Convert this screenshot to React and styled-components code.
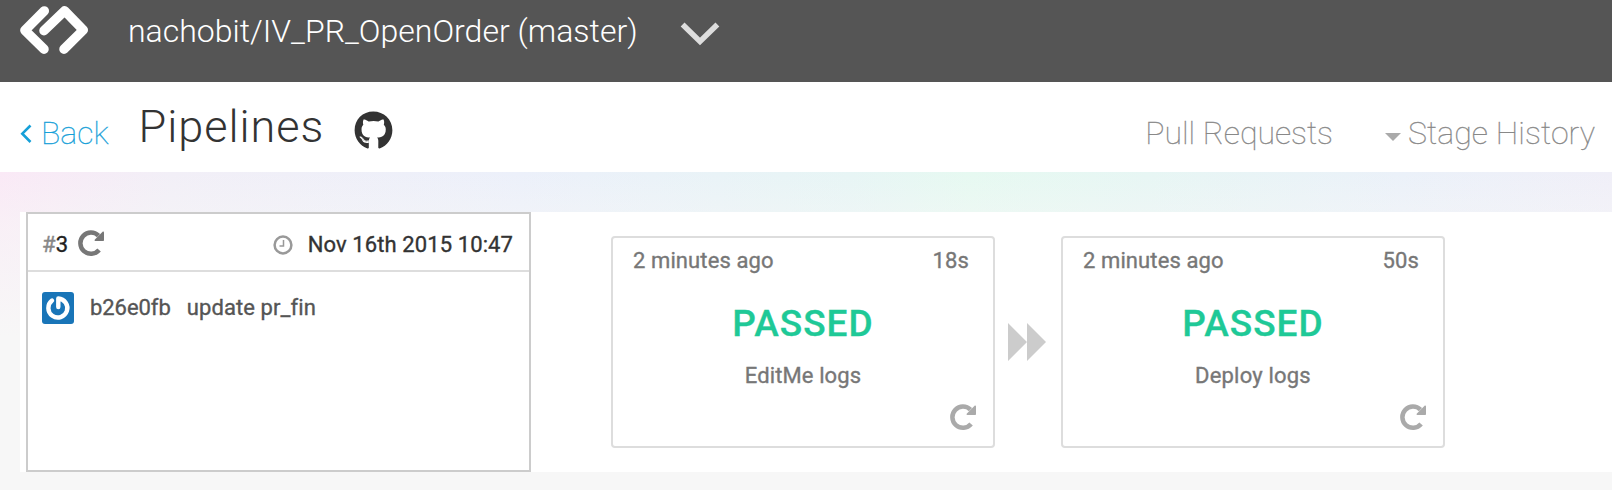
import React from "react";
import styled, { createGlobalStyle } from "styled-components";
import { FaGithub } from "react-icons/fa";

const Global = createGlobalStyle`
  * { box-sizing: border-box; }
  body { margin: 0; background: #f7f7f7; font-family: Roboto, "Liberation Sans", sans-serif; overflow: hidden; }
  h1, p { margin: 0; font-weight: inherit; }
`;

const Page = styled.div`
  height: 490px;
  display: flex;
  flex-direction: column;
`;

const TopBar = styled.header`
  height: 82px;
  flex: none;
  background: #555;
  display: flex;
  align-items: flex-start;
  padding-left: 20px;
`;

const Logo = styled.svg`
  width: 69px;
  height: 49px;
  margin: 6px 39px 0 0;
`;

const ProjectName = styled.span`
  width: 511px;
  margin-top: 12px;
  font-size: 32px;
  line-height: 38px;
  font-weight: 300;
  letter-spacing: 0.01px;
  color: #fff;
  white-space: nowrap;
`;

const Chevron = styled.svg`
  width: 40px;
  height: 24px;
  margin: 22px 0 0 41px;
`;

const SubBar = styled.nav`
  height: 90px;
  flex: none;
  background: #fff;
  display: flex;
  align-items: flex-start;
  padding: 0 17px 0 20px;
`;

const NavText = styled.a`
  margin-top: 32px;
  font-size: 32px;
  line-height: 38px;
  font-weight: 100;
  letter-spacing: ${(p) => p.$spacing || 0}px;
  color: ${(p) => p.$color || "#888"};
  -webkit-text-stroke: 0.3px currentColor;
  white-space: nowrap;
`;

const BackArrow = styled.svg`
  width: 13px;
  height: 20px;
  margin: 42px 8px 0 0;
`;

const Title = styled.h1`
  margin: 18px 0 0 30px;
  width: 188px;
  font-size: 45px;
  line-height: 53px;
  font-weight: 300;
  letter-spacing: 0.95px;
  color: #333;
`;

const Github = styled(FaGithub)`
  width: 39px;
  height: 39px;
  margin: 29px auto 0 27px;
  color: #333;
`;

const Caret = styled.svg`
  width: 16px;
  height: 8px;
  margin: 51px 7px 0 52px;
`;

const Backdrop = styled.main`
  flex: 1;
  padding: 40px 0 18px 20px;
  background:
    linear-gradient(to bottom, rgba(247, 247, 247, 0) 0, rgba(247, 247, 247, 0.45) 50px, #f7f7f7 165px),
    linear-gradient(to right, #fae9f6 0, #f2eff7 170px, #ecf0fa 520px, #e7f5f5 850px, #e6f9f1 970px, #e7f6f4 1150px, #ebf1f9 1400px, #f0eff8 1612px);
`;

const Pipeline = styled.section`
  height: 260px;
  background: #fff;
  display: flex;
  padding-left: 6px;
`;

const RunCard = styled.article`
  width: 505px;
  height: 260px;
  flex: none;
  border: 2px solid #ccc;
`;

const RunHead = styled.div`
  height: 58px;
  border-bottom: 2px solid #ddd;
  display: flex;
  align-items: center;
  padding: 5px 16px 0 14px;
`;

const Text = styled.span`
  font-size: 22px;
  line-height: 28px;
  letter-spacing: ${(p) => p.$spacing ?? 0.1}px;
  color: ${(p) => p.$color || "#777"};
  -webkit-text-stroke: 0.35px currentColor;
  white-space: nowrap;
`;

const RepeatIcon = styled.svg`
  width: 27px;
  height: 27px;
  margin: ${(p) => p.$margin || "0"};
  color: ${(p) => p.$color};
`;

const Clock = styled.svg`
  width: 20px;
  height: 20px;
  margin: 0 15px 0 auto;
`;

const Commit = styled.div`
  display: flex;
  align-items: center;
  padding: 20px 14px;
`;

const CommitText = styled(Text)`
  margin: -1px 0 0 16px;
`;

const Avatar = styled.svg`
  width: 32px;
  height: 32px;
  flex: none;
`;

const Stages = styled.div`
  display: flex;
  align-items: flex-start;
  margin: 24px 0 0 80px;
`;

const StageCard = styled.article`
  width: 384px;
  height: 212px;
  border: 2px solid #ddd;
  border-radius: 4px;
  display: flex;
  flex-direction: column;
  align-items: center;
`;

const StageHead = styled.div`
  align-self: stretch;
  display: flex;
  justify-content: space-between;
  padding: 9px 24px 0 20px;
`;

const Status = styled.p`
  margin-top: 27px;
  font-size: 37px;
  line-height: 44px;
  font-weight: 500;
  letter-spacing: 1px;
  color: #1fc997;
  -webkit-text-stroke: 0.3px currentColor;
`;

const StageName = styled(Text)`
  margin-top: 16px;
`;

const StageFoot = styled.div`
  align-self: flex-end;
  display: flex;
  padding: 14px 16px 0 0;
`;

const Forward = styled.svg`
  width: 38px;
  height: 38px;
  flex: none;
  margin: 87px 15px 0 13px;
`;

function Repeat(props) {
  return (
    <RepeatIcon viewBox="0 0 27 27" {...props}>
      <path d="M21.1 20A10.6 10.6 0 1 1 20.5 5.7" fill="none" stroke="currentColor" strokeWidth="4.500" />
      <path d="M26 2.200V10.200Q26 11 25.200 11H17.400C16.600 11 16.300 10 16.900 9.400L24.600 1.700C25.200 1.100 26 1.400 26 2.200Z" fill="currentColor" />
    </RepeatIcon>
  );
}

function Stage({ time, name, spacing }) {
  return (
    <StageCard>
      <StageHead>
        <Text>2 minutes ago</Text>
        <Text>{time}</Text>
      </StageHead>
      <Status>PASSED</Status>
      <StageName $spacing={spacing}>{name}</StageName>
      <StageFoot>
        <Repeat $color="#aaa" />
      </StageFoot>
    </StageCard>
  );
}

export default function App() {
  return (
    <Page>
      <Global />
      <TopBar>
        <Logo viewBox="0 0 69 49" fill="none" stroke="#fff" strokeWidth="9.500" strokeLinecap="round" strokeLinejoin="round">
          <path d="M24.300 4.900L4.900 24.300L24 43.200" />
          <path d="M24 24.700L44.600 4.800L63.300 24L44 43.200" />
        </Logo>
        <ProjectName>nachobit/IV_PR_OpenOrder (master)</ProjectName>
        <Chevron viewBox="0 0 40 24" fill="none" stroke="#ddd" strokeWidth="5.500">
          <path d="M2.600 2.500L20 19.500L37.400 2.500" />
        </Chevron>
      </TopBar>
      <SubBar>
        <BackArrow viewBox="0 0 13 20" fill="none" stroke="#16a0d8" strokeWidth="2.600">
          <path d="M10.500 1.500L2.300 9.700L10.500 18" />
        </BackArrow>
        <NavText $color="#16a0d8">Back</NavText>
        <Title>Pipelines</Title>
        <Github />
        <NavText>Pull Requests</NavText>
        <Caret viewBox="0 0 16 8">
          <path d="M0 0H16L8 8Z" fill="#aaa" />
        </Caret>
        <NavText $spacing={0.08}>Stage History</NavText>
      </SubBar>
      <Backdrop>
        <Pipeline>
          <RunCard>
            <RunHead>
              <Text $color="#888">#</Text>
              <Text $color="#222">3</Text>
              <Repeat $color="#777" $margin="-3px 0 0 10px" />
              <Clock viewBox="0 0 20 20" fill="none" stroke="#999">
                <circle cx="10" cy="10" r="8.400" strokeWidth="2.500" />
                <path d="M10.500 5V11H6.500" strokeWidth="1.500" />
              </Clock>
              <Text $color="#333">Nov 16th 2015 10:47</Text>
            </RunHead>
            <Commit>
              <Avatar viewBox="0 0 32 32">
                <rect width="32" height="32" rx="3" fill="#1975b8" />
                <path d="M10 8.500A9.500 9.500 0 1 0 16.300 6.500V15" fill="none" stroke="#fff" strokeWidth="4.400" strokeLinecap="round" strokeLinejoin="round" />
              </Avatar>
              <CommitText $color="#555" $spacing={-0.05}>b26e0fb</CommitText>
              <CommitText $color="#555" $spacing={0.08}>update pr_fin</CommitText>
            </Commit>
          </RunCard>
          <Stages>
            <Stage time="18s" name="EditMe logs" />
            <Forward viewBox="0 0 38 38">
              <path d="M0 0L19 19V0L38 19L19 38V19L0 38Z" fill="#ccc" />
            </Forward>
            <Stage time="50s" name="Deploy logs" spacing={0.2} />
          </Stages>
        </Pipeline>
      </Backdrop>
    </Page>
  );
}
